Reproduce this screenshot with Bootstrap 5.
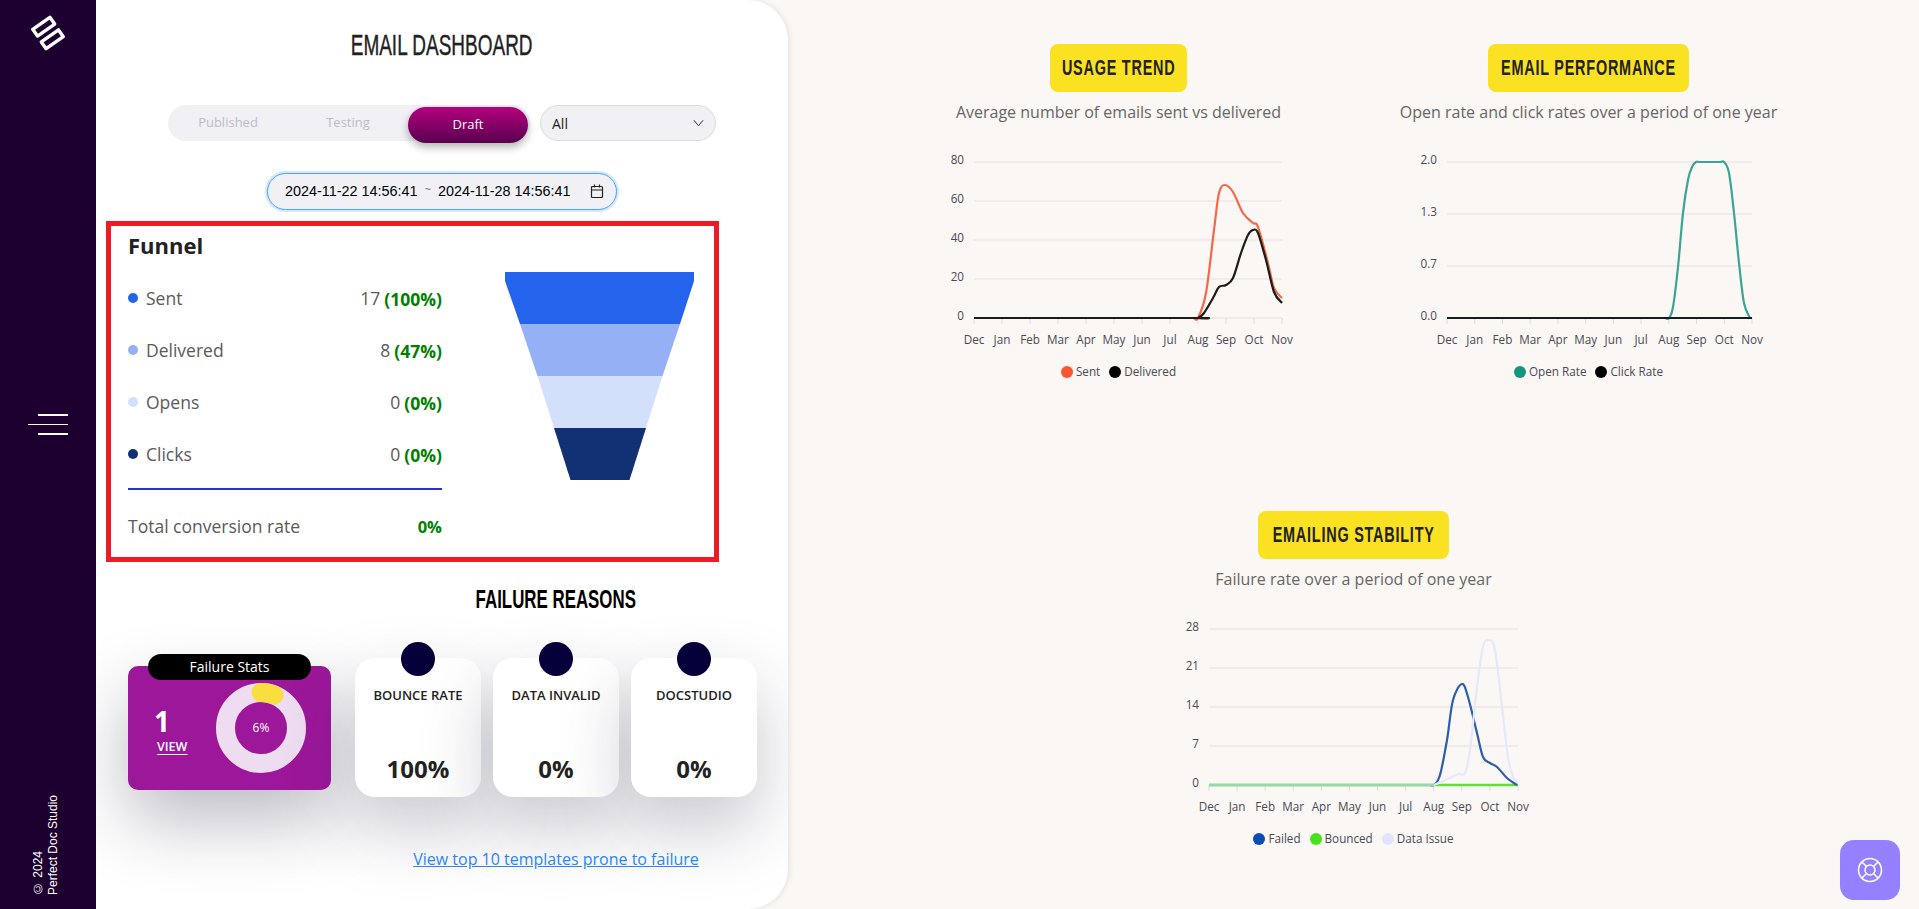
<!DOCTYPE html>
<html lang="en">
<head>
    <meta charset="UTF-8">
    <meta name="viewport" content="width=device-width, initial-scale=1.0">
    <title>Email Dashboard</title>
    <link href="https://cdn.jsdelivr.net/npm/bootstrap@5.3.3/dist/css/bootstrap.min.css" rel="stylesheet">
    <style>
        html, body {
            height: 100%;
        }
        body {
            background-color: #fbf7f4;
            font-family: "Open Sans", "Liberation Sans", sans-serif;
            overflow: hidden;
        }
        /* no condensed face installed, so the headings get squeezed */
        .squeeze {
            display: inline-block;
            vertical-align: top;
            font-family: "Liberation Sans", Arial, sans-serif;
            white-space: nowrap;
        }
        .side-bar {
            width: 96px;
            height: 909px;
            background-color: #1d0030;
            flex-shrink: 0;
        }
        .side-logo {
            margin: 13px 0 0 29px;
            display: block;
        }
        .side-burger {
            margin: 359px 0 0 28px;
            width: 40px;
        }
        .side-burger i {
            display: block;
            height: 1.5px;
            background-color: #fff;
            margin: 0 0 8px 10px;
        }
        .side-burger i:nth-child(2) {
            margin-left: 0;
        }
        .side-copy {
            margin: 360px 0 0 31px;
            height: 100px;
            writing-mode: vertical-rl;
            transform: rotate(180deg);
            font-family: "Liberation Sans", Arial, sans-serif;
            font-size: 12px;
            line-height: 15px;
            color: #fff;
            white-space: nowrap;
        }
        .main-panel {
            width: 692px;
            height: 909px;
            background-color: #fff;
            border-radius: 0 40px 40px 0;
            box-shadow: 2px 0 5px rgba(0, 0, 0, 0.08);
            flex-shrink: 0;
            overflow: hidden;
        }
        .page-title {
            height: 40px;
            margin: 25px 0 0;
            font-size: 30px;
            line-height: 40px;
            font-weight: 400;
            color: #222;
            text-align: center;
        }
        .page-title .squeeze {
            transform: scaleX(0.633);
            -webkit-text-stroke: 0.4px #222;
        }
        .status-row {
            margin-top: 40px;
            gap: 10px;
        }
        .status-tabs {
            width: 362px;
            height: 36px;
            background-color: #f0f0f5;
            border-radius: 18px;
        }
        .status-tabs .btn {
            width: 120px;
            height: 36px;
            padding: 0;
            border: 0;
            border-radius: 18px;
            font-size: 13px;
            color: #bdbdc4;
        }
        .status-tabs .btn.active {
            color: #fff;
            margin-top: 2px;
            background: linear-gradient(180deg, #b3007e, #59004f);
            box-shadow: 0 4px 8px rgba(0, 0, 0, 0.3);
        }
        .status-select {
            width: 176px;
            height: 36px;
            padding: 0 30px 0 11px;
            font-size: 14px;
            color: #222;
            background-color: #f0f0f5;
            background-image: url("data:image/svg+xml,%3csvg xmlns='http://www.w3.org/2000/svg' viewBox='0 0 12 8'%3e%3cpath fill='none' stroke='%23222' stroke-width='1' d='M1 1l5 6 5-6'/%3e%3c/svg%3e");
            background-position: right 11px center;
            background-size: 11px 8px;
            border: 1px solid #dcdce0;
            border-radius: 18px;
        }
        .date-range {
            width: 350px;
            height: 37px;
            margin: 32px 0 0 171px;
            padding: 0 12px 0 17px;
            background-color: #f0f0f5;
            border: 1px solid #4da3ff;
            border-radius: 19px;
            box-shadow: 0 0 0 2px #d3e8ff;
            font-family: "Liberation Sans", Arial, sans-serif;
            font-size: 14.4px;
            color: #000;
        }
        .date-tilde {
            color: #666;
            font-size: 11px;
            margin: 0 7px;
            position: relative;
            top: -2px;
        }
        .funnel-box {
            width: 613px;
            height: 341px;
            margin: 11px 0 0 10px;
            padding-left: 17px;
            border: 5px solid #ed1c24;
        }
        .funnel-left {
            width: 314px;
        }
        .funnel-title {
            margin: 0;
            font-size: 22px;
            line-height: 38px;
            font-weight: 700;
            color: #222;
        }
        .funnel-row {
            height: 52px;
            font-size: 17.5px;
            color: #5a5a5a;
        }
        .funnel-rows {
            margin-top: 8px;
        }
        .funnel-dot {
            width: 10px;
            height: 10px;
            border-radius: 50%;
            margin-right: 8px;
        }
        .funnel-pct {
            font-weight: 700;
            font-size: 17.5px;
            color: #008000;
            margin-left: 4px;
            position: relative;
            top: 1px;
        }
        .funnel-rule {
            height: 2px;
            margin-top: 8px;
            background-color: #2a2fd8;
        }
        .funnel-total {
            height: 72px;
            font-size: 17.5px;
            color: #5a5a5a;
        }
        .funnel-total .funnel-pct {
            font-size: 16.5px;
        }
        .funnel-shape {
            margin: 46px 0 0 63px;
            display: block;
        }
        .lower-wrap {
            padding-left: 32px;
        }
        .stats-col {
            width: 203px;
            margin: 92px 24px 0 0;
        }
        .stats-card {
            height: 124px;
            margin-top: 12px;
            padding: 0 25px 0 29px;
            background-color: #9c1799;
            border-radius: 10px;
            box-shadow: 0 30px 70px rgba(30, 30, 60, 0.3);
        }
        .stats-tag {
            position: absolute;
            top: -12px;
            left: 20px;
            width: 163px;
            height: 26px;
            background-color: #000;
            border-radius: 13px;
            font-size: 14px;
            line-height: 26px;
            color: #fff;
            text-align: center;
        }
        .stats-count {
            padding-top: 3px;
        }
        .stats-num {
            margin-left: -3px;
            font-size: 28px;
            line-height: 33px;
            font-weight: 700;
            color: #fff;
        }
        .stats-view {
            display: block;
            font-size: 12.5px;
            line-height: 17px;
            font-weight: 600;
            color: #fff;
            text-underline-offset: 3px;
        }
        .stats-donut {
            position: relative;
            width: 90px;
            height: 90px;
        }
        .stats-donut span {
            position: absolute;
            inset: 0;
            font-size: 12px;
            line-height: 90px;
            text-align: center;
            color: #fff;
        }
        .reasons-col {
            width: 402px;
        }
        .reasons-title {
            height: 30px;
            margin: 22px 0 0;
            font-size: 25px;
            line-height: 30px;
            font-weight: 700;
            color: #000;
            text-align: center;
        }
        .reasons-title .squeeze {
            transform: scaleX(0.675);
        }
        .reason-card {
            width: 126px;
            height: 139px;
            border: 0;
            border-radius: 20px;
            background-color: #fff;
            box-shadow: 0 30px 70px rgba(40, 40, 70, 0.26);
            text-align: center;
            color: #222;
        }
        .reason-dot {
            position: absolute;
            top: -16px;
            left: 46px;
            width: 34px;
            height: 34px;
            border-radius: 50%;
            background-color: #05003a;
        }
        .reason-label {
            margin-top: 28px;
            font-size: 13px;
            line-height: 18px;
            font-weight: 600;
        }
        .reason-value {
            margin-top: 49px;
            font-size: 24px;
            line-height: 32px;
            font-weight: 700;
        }
        .reasons-grid {
            margin-top: 44px;
        }
        .reasons-link {
            display: block;
            margin-top: 50px;
            font-size: 16px;
            line-height: 24px;
            color: #2a8cff;
            text-align: center;
        }
        .chart-area {
            padding-top: 44px;
        }
        .chart-row-low {
            margin-top: 130px;
        }
        .chart-block {
            width: 470px;
            text-align: center;
        }
        .chart-tag {
            display: inline-flex;
            justify-content: center;
            height: 48px;
            background-color: #fae122;
            border-radius: 8px;
            font-size: 22px;
            line-height: 48px;
            font-weight: 700;
            letter-spacing: 1.2px;
            color: #222;
        }
        .chart-tag .squeeze {
            transform: scaleX(0.655);
        }
        .tag-usage {
            width: 137px;
        }
        .tag-perf {
            width: 201px;
        }
        .tag-stable {
            width: 191px;
        }
        .chart-sub {
            margin: 8px 0 0;
            font-size: 16px;
            line-height: 24px;
            color: #666;
        }
        .chart-svg {
            display: block;
            margin-top: 6px;
        }
        .chart-svg text {
            font-family: "Open Sans", sans-serif;
            font-size: 11.7px;
            fill: #4a4a55;
        }
        .chart-legend {
            margin-top: 6px;
            height: 20px;
            gap: 9px;
            font-size: 11.7px;
            line-height: 20px;
            color: #4a4a55;
        }
        .chart-legend i {
            display: inline-block;
            width: 12px;
            height: 12px;
            border-radius: 50%;
            margin-right: 3px;
            vertical-align: -2px;
        }
        .help-btn {
            position: fixed;
            right: 19px;
            bottom: 9px;
            width: 60px;
            height: 60px;
            border: 0;
            border-radius: 14px;
            background-color: #9580ff;
        }
    </style>
</head>
<body>
    <div class="d-flex">
        <!-- left rail -->
        <div class="side-bar">
            <svg class="side-logo" width="40" height="42" viewBox="29 13 40 42" fill="none" stroke="#fff" stroke-width="3.4" stroke-linejoin="round">
                <path d="M32.700 29.300 L49.900 17.300 L54.700 24.100 L37.500 36.100 Z"></path>
                <path d="M41.300 41.900 L58.500 29.900 L63.300 36.700 L46.100 48.700 Z"></path>
            </svg>
            <div class="side-burger"><i></i><i></i><i></i></div>
            <div class="side-copy">© 2024<br>Perfect Doc Studio</div>
        </div>

        <!-- dashboard panel -->
        <div class="main-panel">
            <h1 class="page-title"><span class="squeeze">EMAIL DASHBOARD</span></h1>

            <div class="status-row d-flex justify-content-center">
                <div class="status-tabs d-flex">
                    <button class="btn">Published</button>
                    <button class="btn">Testing</button>
                    <button class="btn active">Draft</button>
                </div>
                <select class="form-select status-select">
                    <option>All</option>
                </select>
            </div>

            <div class="date-range d-flex align-items-center">
                <span>2024-11-22 14:56:41</span>
                <span class="date-tilde">~</span>
                <span>2024-11-28 14:56:41</span>
                <svg class="ms-auto" width="14" height="15" viewBox="0 0 14 15" fill="none" stroke="#222" stroke-width="1.2">
                    <rect x="1.5" y="2.5" width="11" height="11" rx="1"></rect>
                    <path d="M1.5 6h11M4.5 0.5v3M9.500 0.5v3"></path>
                </svg>
            </div>

            <div class="funnel-box d-flex">
                <div class="funnel-left">
                    <h2 class="funnel-title">Funnel</h2>
                    <div class="funnel-rows">
                        <div class="funnel-row d-flex align-items-center">
                            <span class="funnel-dot" style="background:#2464ec"></span>Sent
                            <span class="ms-auto">17</span><span class="funnel-pct">(100%)</span>
                        </div>
                        <div class="funnel-row d-flex align-items-center">
                            <span class="funnel-dot" style="background:#96b0f5"></span>Delivered
                            <span class="ms-auto">8</span><span class="funnel-pct">(47%)</span>
                        </div>
                        <div class="funnel-row d-flex align-items-center">
                            <span class="funnel-dot" style="background:#d3e0fb"></span>Opens
                            <span class="ms-auto">0</span><span class="funnel-pct">(0%)</span>
                        </div>
                        <div class="funnel-row d-flex align-items-center">
                            <span class="funnel-dot" style="background:#123175"></span>Clicks
                            <span class="ms-auto">0</span><span class="funnel-pct">(0%)</span>
                        </div>
                    </div>
                    <div class="funnel-rule"></div>
                    <div class="funnel-total d-flex align-items-center justify-content-between">
                        <span>Total conversion rate</span>
                        <span class="funnel-pct">0%</span>
                    </div>
                </div>
                <svg class="funnel-shape" width="189" height="208" viewBox="505 272 189 208">
                    <path fill="#2464ec" d="M505 272H694V281L680 324H520L505 281Z"></path>
                    <path fill="#96b0f5" d="M520 324H680L662.500 376H537.500Z"></path>
                    <path fill="#d3e0fb" d="M537.500 376H662.500L646 428H554Z"></path>
                    <path fill="#123175" d="M554 428H646L629.500 480H570.500Z"></path>
                </svg>
            </div>

            <div class="lower-wrap d-flex">
                <div class="stats-col">
                    <div class="stats-card position-relative d-flex align-items-center justify-content-between">
                        <div class="stats-tag">Failure Stats</div>
                        <div class="stats-count">
                            <div class="stats-num">1</div>
                            <a class="stats-view" href="#">VIEW</a>
                        </div>
                        <div class="stats-donut">
                            <svg width="90" height="90" viewBox="0 0 90 90" fill="none" stroke-width="19">
                                <circle cx="45" cy="45" r="35.5" stroke="#eedcf0"></circle>
                                <path d="M45 9.500A35.500 35.500 0 0 1 58 12" stroke="#f8de3f" stroke-linecap="round"></path>
                            </svg>
                            <span>6%</span>
                        </div>
                    </div>
                </div>
                <div class="reasons-col">
                    <h2 class="reasons-title"><span class="squeeze">FAILURE REASONS</span></h2>
                    <div class="reasons-grid d-flex justify-content-between">
                        <div class="card reason-card">
                            <span class="reason-dot"></span>
                            <div class="reason-label">BOUNCE RATE</div>
                            <div class="reason-value">100%</div>
                        </div>
                        <div class="card reason-card">
                            <span class="reason-dot"></span>
                            <div class="reason-label">DATA INVALID</div>
                            <div class="reason-value">0%</div>
                        </div>
                        <div class="card reason-card">
                            <span class="reason-dot"></span>
                            <div class="reason-label">DOCSTUDIO</div>
                            <div class="reason-value">0%</div>
                        </div>
                    </div>
                    <a class="reasons-link" href="#">View top 10 templates prone to failure</a>
                </div>
            </div>
        </div>

        <!-- charts -->
        <div class="chart-area flex-grow-1">
            <div class="d-flex justify-content-center">
                <div class="chart-block">
                    <span class="chart-tag tag-usage"><span class="squeeze">USAGE TREND</span></span>
                    <p class="chart-sub">Average number of emails sent vs delivered</p>
                    <svg class="chart-svg" id="chartUsage" width="470" height="225"></svg>
                    <div class="chart-legend d-flex justify-content-center">
                        <span><i style="background:#fb5530"></i>Sent</span>
                        <span><i style="background:#000"></i>Delivered</span>
                    </div>
                </div>
                <div class="chart-block">
                    <span class="chart-tag tag-perf"><span class="squeeze">EMAIL PERFORMANCE</span></span>
                    <p class="chart-sub">Open rate and click rates over a period of one year</p>
                    <svg class="chart-svg" id="chartPerf" width="470" height="225"></svg>
                    <div class="chart-legend d-flex justify-content-center">
                        <span><i style="background:#159482"></i>Open Rate</span>
                        <span><i style="background:#000"></i>Click Rate</span>
                    </div>
                </div>
            </div>
            <div class="chart-row-low d-flex justify-content-center">
                <div class="chart-block">
                    <span class="chart-tag tag-stable"><span class="squeeze">EMAILING STABILITY</span></span>
                    <p class="chart-sub">Failure rate over a period of one year</p>
                    <svg class="chart-svg" id="chartStable" width="470" height="225"></svg>
                    <div class="chart-legend d-flex justify-content-center">
                        <span><i style="background:#0a4cb0"></i>Failed</span>
                        <span><i style="background:#45e21c"></i>Bounced</span>
                        <span><i style="background:#e2e4fd"></i>Data Issue</span>
                    </div>
                </div>
            </div>
        </div>
    </div>

    <button class="help-btn" aria-label="Help">
        <svg width="26" height="26" viewBox="0 0 26 26" fill="none" stroke="#fff" stroke-width="1.5">
            <circle cx="13" cy="13" r="11.5"></circle>
            <circle cx="13" cy="13" r="5"></circle>
            <path d="M5 5l4.500 4.500M21 5l-4.500 4.500M5 21l4.500-4.500M21 21l-4.500-4.500"></path>
        </svg>
    </button>

    <script>
        const months = ['Dec', 'Jan', 'Feb', 'Mar', 'Apr', 'May', 'Jun', 'Jul', 'Aug', 'Sep', 'Oct', 'Nov'];

        // catmull-rom through the points, gives the soft chart curve
        function smoothPath(pts) {
            let d = 'M' + pts[0][0] + ' ' + pts[0][1];
            for (let i = 0; i < pts.length - 1; i++) {
                const p0 = pts[i - 1] || pts[i];
                const p1 = pts[i];
                const p2 = pts[i + 1];
                const p3 = pts[i + 2] || p2;
                d += 'C' + (p1[0] + (p2[0] - p0[0]) / 6) + ' ' + (p1[1] + (p2[1] - p0[1]) / 6) + ' ' +
                    (p2[0] - (p3[0] - p1[0]) / 6) + ' ' + (p2[1] - (p3[1] - p1[1]) / 6) + ' ' + p2[0] + ' ' + p2[1];
            }
            return d;
        }

        function drawChart(id, cfg) {
            const svg = document.getElementById(id);
            const step = (cfg.x1 - cfg.x0) / 11;
            const base = cfg.grid[cfg.grid.length - 1][1];
            let html = '';
            cfg.grid.forEach(g => {
                html += '<line x1="' + cfg.x0 + '" x2="' + cfg.x1 + '" y1="' + g[1] + '" y2="' + g[1] + '" stroke="#ebe9e8" stroke-width="1.5"/>';
                html += '<text x="' + (cfg.x0 - 10) + '" y="' + (g[1] + 1.5) + '" text-anchor="end">' + g[0] + '</text>';
            });
            months.forEach((m, i) => {
                const x = cfg.x0 + step * i;
                html += '<line x1="' + x + '" x2="' + x + '" y1="' + base + '" y2="' + (base + 6) + '" stroke="#ddd"/>';
                html += '<text x="' + x + '" y="' + (base + 25.5) + '" text-anchor="middle">' + m + '</text>';
            });
            cfg.lines.forEach(l => {
                html += '<path d="' + smoothPath(l.pts) + '" fill="none" stroke="' + l.color + '" stroke-width="' + (l.width || 2.2) + '"/>';
            });
            svg.setAttribute('viewBox', cfg.vx + ' ' + (base - 188) + ' 470 225');
            svg.innerHTML = html;
        }

        drawChart('chartUsage', {
            vx: 883, x0: 973, x1: 1281,
            grid: [[80, 162], [60, 201], [40, 240], [20, 279], [0, 318]],
            lines: [
                { color: '#f4694a', pts: [[1193, 318], [1197, 318], [1205, 293], [1213, 230], [1218, 193], [1224, 185], [1232, 192], [1242, 213], [1252, 223], [1257, 227], [1267, 263], [1273, 288], [1281, 298]] },
                { color: '#1c1c1c', pts: [[973, 318], [1190, 318], [1197, 318], [1203, 313], [1212, 298], [1218, 287], [1225, 285], [1232, 278], [1240, 253], [1247, 235], [1252, 230], [1257, 233], [1265, 260], [1273, 292], [1281, 303]] }
            ]
        });

        drawChart('chartPerf', {
            vx: 1353, x0: 1446, x1: 1751,
            grid: [['2.0', 162], ['1.3', 214], ['0.7', 266], ['0.0', 318]],
            lines: [
                { color: '#3aa594', pts: [[1664, 318], [1668, 318], [1672, 307], [1677, 267], [1682, 213], [1687, 180], [1691, 167], [1695, 162], [1700, 162], [1718, 162], [1723, 162], [1728, 173], [1733, 213], [1738, 263], [1743, 303], [1749, 318]] },
                { color: '#10201e', pts: [[1446, 318], [1751, 318]] }
            ]
        });

        drawChart('chartStable', {
            vx: 1119, x0: 1209, x1: 1518,
            grid: [[28, 629], [21, 668], [14, 707], [7, 746], [0, 785]],
            lines: [
                { color: '#62de3e', width: 2.500, pts: [[1209, 785], [1518, 785]] },
                { color: '#2b5fad', pts: [[1430, 785], [1434, 785], [1440, 775], [1447, 740], [1453, 700], [1462, 684], [1468, 697], [1477, 733], [1483, 757], [1490, 763], [1497, 767], [1507, 778], [1517, 785]] },
                { color: '#e6e8fc', pts: [[1430, 785], [1434, 785], [1450, 778], [1458, 774], [1465, 773], [1470, 750], [1477, 687], [1483, 647], [1489, 640], [1495, 650], [1502, 707], [1508, 757], [1513, 777], [1518, 783]] },
                { color: '#98d6ab', width: 2.500, pts: [[1209, 785], [1434, 785]] }
            ]
        });
    </script>
    <script src="https://cdn.jsdelivr.net/npm/bootstrap@5.3.3/dist/js/bootstrap.bundle.min.js"></script>
</body>
</html>
